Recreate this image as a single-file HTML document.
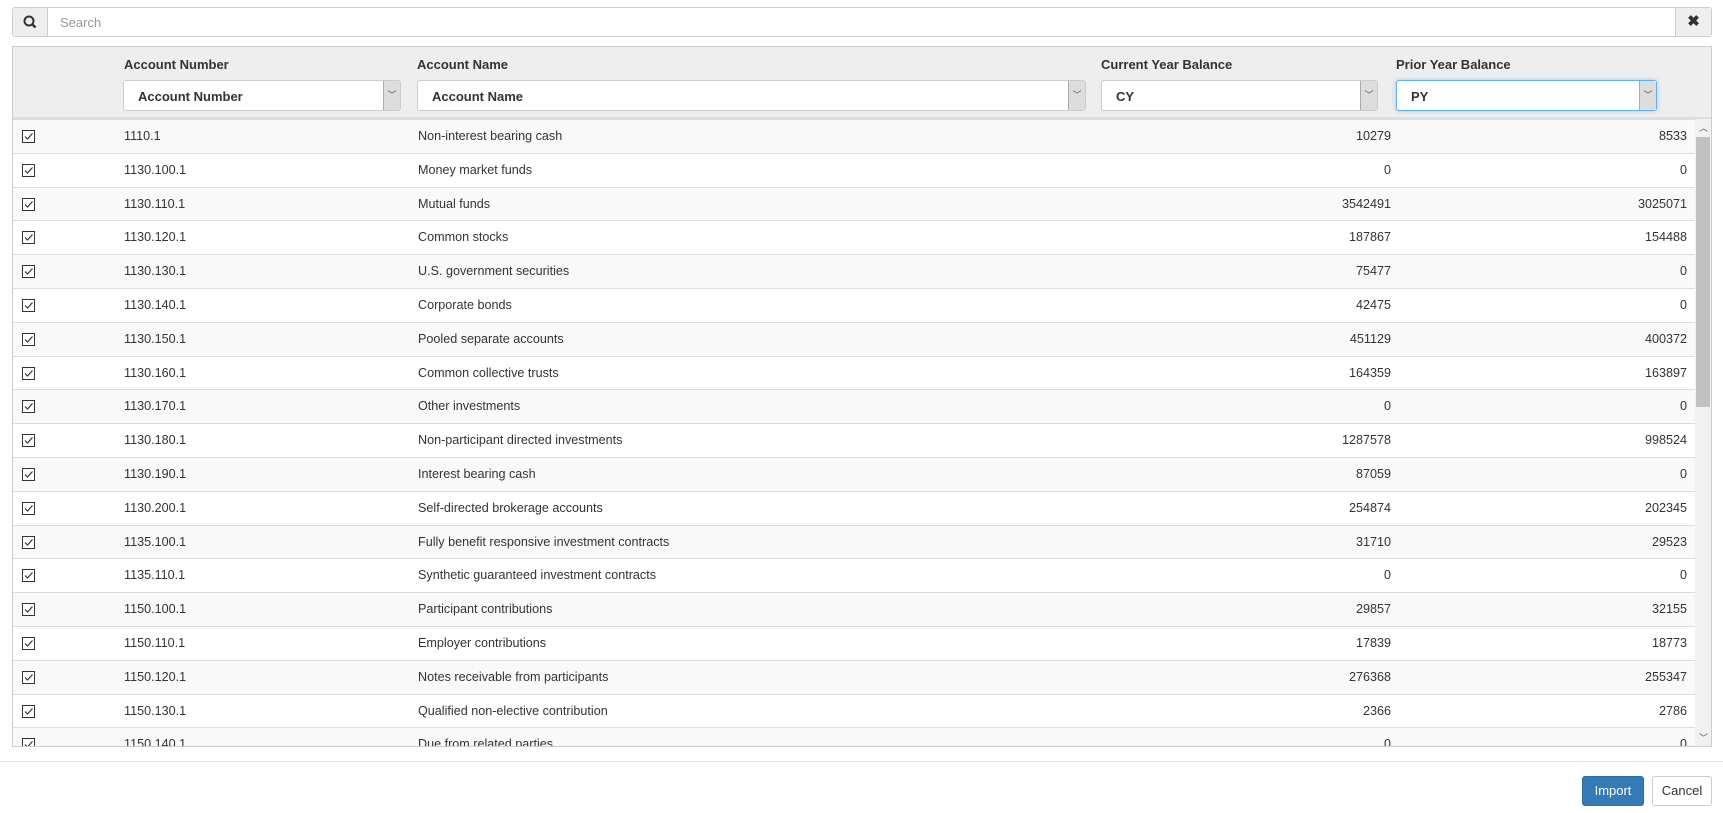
<!DOCTYPE html>
<html><head><style>
*{box-sizing:border-box;margin:0;padding:0}
body{width:1723px;height:813px;background:#fff;font-family:"Liberation Sans",sans-serif;font-size:13px;color:#333;position:relative;overflow:hidden}
.abs{position:absolute}
.search{left:12px;top:7px;width:1700px;height:30px;border:1px solid #ccc;border-radius:3px}
.search .ic{position:absolute;left:0;top:0;width:35px;height:28px;background:#eee;border-right:1px solid #ccc}
.search .cl{position:absolute;right:0;top:0;width:36px;height:28px;background:#eee;border-left:1px solid #ccc;text-align:center;line-height:28px;font-weight:bold;font-size:15px;color:#333}
.search .ph{position:absolute;left:47px;top:7px;color:#999}
.panel{left:12px;top:46px;width:1700px;height:701px;border:1px solid #ccc;overflow:hidden}
.head{position:absolute;left:0;top:0;width:1698px;height:73px;background:#eee;border-bottom:3px solid #ddd}
.lbl{position:absolute;top:10px;font-weight:bold;font-size:13px;color:#333}
.sel{position:absolute;top:33px;height:31px;background:#fff;border:1px solid #ccc;border-radius:3px;font-weight:bold;padding:8px 0 0 14px}
.sel .ar{position:absolute;right:0;top:0;width:17px;height:29px;background:#ddd;border-left:1px solid #aaa;font-size:9px;text-align:center;line-height:28px;color:#555;font-weight:normal}
.row{position:absolute;left:0;width:1682px;height:33.8px;border-bottom:1px solid #ddd;font-size:12.6px}
.row span{position:absolute;top:9px}
.cb{position:absolute;left:9px;top:10px;width:13px;height:13px;border:1px solid #333;background:#fff}
.sb{left:1695px;top:119px;width:16px;height:627px;background:#f1f1f1}
.btn{position:absolute;top:776px;height:30px;border-radius:3px;text-align:center;line-height:28px;font-size:13px}
</style></head><body>
<div class="abs search"><div class="ic"><svg width="35" height="28"><circle cx="16" cy="13" r="4.5" fill="none" stroke="#333" stroke-width="2"/><line x1="19" y1="16" x2="22.5" y2="19.5" stroke="#333" stroke-width="2.5"/></svg></div><div class="ph">Search</div><div class="cl">✖</div></div>
<div class="abs panel">
<div class="head">
<div class="lbl" style="left:111px">Account Number</div>
<div class="lbl" style="left:404px">Account Name</div>
<div class="lbl" style="left:1088px">Current Year Balance</div>
<div class="lbl" style="left:1383px">Prior Year Balance</div>
<div class="sel" style="left:110px;width:278px">Account Number<div class="ar">﹀</div></div>
<div class="sel" style="left:404px;width:669px">Account Name<div class="ar">﹀</div></div>
<div class="sel" style="left:1088px;width:277px">CY<div class="ar">﹀</div></div>
<div class="sel" style="left:1383px;width:261px;border-color:#66afe9;box-shadow:0 0 5px rgba(102,175,233,.6)">PY<div class="ar">﹀</div></div>
</div>
<div id="rows"></div>
</div>
<div class="abs sb"><div style="position:absolute;left:1px;top:18px;width:14px;height:270px;background:#c1c1c1"></div><div style="position:absolute;left:4px;top:2px;font-size:9px;color:#555">︿</div><div style="position:absolute;left:4px;bottom:2px;font-size:9px;color:#555">﹀</div></div>
<div class="abs" style="left:0;top:761px;width:1723px;height:1px;background:#e5e5e5"></div>
<div class="btn" style="left:1582px;width:62px;background:#337ab7;border:1px solid #2e6da4;color:#fff">Import</div>
<div class="btn" style="left:1652px;width:60px;background:#fff;border:1px solid #ccc;color:#333">Cancel</div>
<script>
var d=[["1110.1","Non-interest bearing cash","10279","8533"],["1130.100.1","Money market funds","0","0"],["1130.110.1","Mutual funds","3542491","3025071"],["1130.120.1","Common stocks","187867","154488"],["1130.130.1","U.S. government securities","75477","0"],["1130.140.1","Corporate bonds","42475","0"],["1130.150.1","Pooled separate accounts","451129","400372"],["1130.160.1","Common collective trusts","164359","163897"],["1130.170.1","Other investments","0","0"],["1130.180.1","Non-participant directed investments","1287578","998524"],["1130.190.1","Interest bearing cash","87059","0"],["1130.200.1","Self-directed brokerage accounts","254874","202345"],["1135.100.1","Fully benefit responsive investment contracts","31710","29523"],["1135.110.1","Synthetic guaranteed investment contracts","0","0"],["1150.100.1","Participant contributions","29857","32155"],["1150.110.1","Employer contributions","17839","18773"],["1150.120.1","Notes receivable from participants","276368","255347"],["1150.130.1","Qualified non-elective contribution","2366","2786"],["1150.140.1","Due from related parties","0","0"]];
var h="";d.forEach(function(r,i){h+='<div class="row" style="top:'+(73+i*33.8)+'px;background:'+(i%2?'#fff':'#f9f9f9')+'"><div class="cb"><svg width="11" height="11" style="position:absolute;left:0;top:0"><path d="M2 5.5L4.5 8L9.5 2.5" fill="none" stroke="#333" stroke-width="1.2"/></svg></div><span style="left:111px">'+r[0]+'</span><span style="left:405px">'+r[1]+'</span><span style="right:304px">'+r[2]+'</span><span style="right:8px">'+r[3]+'</span></div>'});
document.getElementById("rows").innerHTML=h;
</script>
</body></html>
